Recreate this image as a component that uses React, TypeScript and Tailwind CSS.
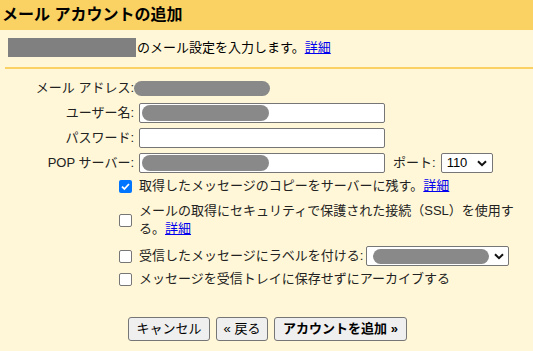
import React from "react";

const Pill = ({ w, h = 16, rect = false }: { w: number; h?: number; rect?: boolean }) => (
  <span
    className={rect ? "inline-block bg-[#808080]" : "inline-block bg-[#898989] rounded-full"}
    style={{ width: w, height: h }}
  />
);

const Input = ({ filled }: { filled?: boolean }) => (
  <div className="w-[246px] h-[20px] border border-[#767676] rounded-[2px] bg-white flex items-center pl-[2px]">
    {filled ? <Pill w={127} /> : null}
  </div>
);

const Chevron = () => (
  <svg width="10" height="7" viewBox="0 0 10 7" className="shrink-0">
    <path d="M1 1.2 L5 5.2 L9 1.2" fill="none" stroke="#111" strokeWidth="2" />
  </svg>
);

const Box = ({ checked }: { checked?: boolean }) =>
  checked ? (
    <span className="w-[13px] h-[13px] rounded-[2px] bg-[#0075ff] flex items-center justify-center shrink-0">
      <svg width="11" height="11" viewBox="0 0 11 11">
        <path d="M2 5.6 L4.4 8 L9 3" fill="none" stroke="white" strokeWidth="1.8" />
      </svg>
    </span>
  ) : (
    <span className="w-[13px] h-[13px] rounded-[2px] border border-[#767676] bg-white shrink-0" />
  );

const Link = ({ children }: { children: React.ReactNode }) => (
  <a className="text-[#0000ee] underline cursor-pointer">{children}</a>
);

export default function App() {
  return (
    <div
      className="w-[533px] h-[351px] bg-[#fff7d7] overflow-hidden text-[13px] text-[#222]"
      style={{ fontFamily: '"Liberation Sans", "Noto Sans CJK JP", sans-serif' }}
    >
      <div className="h-[30px] bg-[#fad163] flex items-center pl-[2px]">
        <span className="text-[16px] font-bold text-black leading-none">メール アカウントの追加</span>
      </div>
      <div className="flex items-center h-[19px] mt-[8px] pl-[8px] text-black">
        <Pill w={128} h={19} rect />
        <span className="ml-[1px]">のメール設定を入力します。</span>
        <Link>詳細</Link>
      </div>
      <div className="ml-[5px] mt-[10px] h-[2px] bg-[#fad163]" />

      <div className="mt-[9px]">
        <div className="flex items-center h-[20px]">
          <span className="w-[134px] text-right">メール アドレス:</span>
          <span className="ml-[0px] -ml-[1px] flex items-center">
            <Pill w={136} h={15} />
          </span>
        </div>
        <div className="flex items-center h-[20px] mt-[5px]">
          <span className="w-[134px] text-right">ユーザー名:</span>
          <span className="ml-[5px]">
            <Input filled />
          </span>
        </div>
        <div className="flex items-center h-[20px] mt-[5px]">
          <span className="w-[134px] text-right">パスワード:</span>
          <span className="ml-[5px]">
            <Input />
          </span>
        </div>
        <div className="flex items-center h-[20px] mt-[5px]">
          <span className="w-[134px] text-right">POP サーバー:</span>
          <span className="ml-[5px]">
            <Input filled />
          </span>
          <span className="ml-[8px]">ポート:</span>
          <div className="ml-[5px] w-[52px] h-[20px] border border-[#767676] rounded-[2px] bg-white flex items-center justify-between pl-[5px] pr-[5px] text-black">
            <span>110</span>
            <Chevron />
          </div>
        </div>

        <div className="flex items-center h-[18px] mt-[4px] pl-[119px] gap-[7px]">
          <Box checked />
          <span>
            取得したメッセージのコピーをサーバーに残す。<Link>詳細</Link>
          </span>
        </div>
        <div className="flex items-center mt-[7px] pl-[119px] gap-[7px] leading-[18px]">
          <Box />
          <span>
            メールの取得にセキュリティで保護された接続（SSL）を使用す
            <br />
            る。<Link>詳細</Link>
          </span>
        </div>
        <div className="flex items-center h-[20px] mt-[8px] pl-[119px] gap-[7px]">
          <Box />
          <span>受信したメッセージにラベルを付ける:</span>
          <div className="-ml-[4px] w-[143px] h-[20px] border border-[#767676] rounded-[2px] bg-white flex items-center justify-between pl-[6px] pr-[4px]">
            <Pill w={116} h={15} />
            <Chevron />
          </div>
        </div>
        <div className="flex items-center h-[18px] mt-[4px] pl-[119px] gap-[7px]">
          <Box />
          <span>メッセージを受信トレイに保存せずにアーカイブする</span>
        </div>

        <div className="flex items-center mt-[29px] pl-[128px] gap-[6px] text-black">
          <button className="h-[24px] w-[82px] bg-[#efefef] border border-[#767676] rounded-[3px]">キャンセル</button>
          <button className="h-[24px] w-[52px] bg-[#efefef] border border-[#767676] rounded-[3px]">« 戻る</button>
          <button className="h-[24px] w-[133px] bg-[#efefef] border border-[#767676] rounded-[3px] font-bold">
            アカウントを追加 »
          </button>
        </div>
      </div>
    </div>
  );
}
